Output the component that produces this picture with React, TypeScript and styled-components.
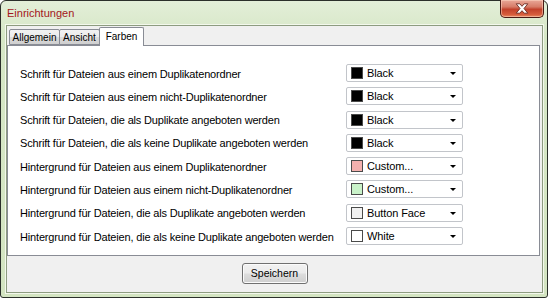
import React from 'react'
import styled, { createGlobalStyle } from 'styled-components'

const GlobalStyle = createGlobalStyle`
  html, body {
    margin: 0;
    padding: 0;
    background: #ffffff;
  }
  body {
    font-family: "Liberation Sans", Arial, sans-serif;
    font-size: 11px;
    color: #000;
  }
`

const Window = styled.div`
  box-sizing: border-box;
  width: 548px;
  height: 298px;
  border: 1px solid #2b2f2a;
  border-radius: 6px 6px 3px 3px;
  background: linear-gradient(180deg, #e3eed8 0%, #d6e7c6 12%, #d3e4c1 100%);
  display: flex;
  flex-direction: column;
  padding: 0 4px 4px 5px;
  position: relative;
`

const TitleBar = styled.div`
  height: 24px;
  display: flex;
  align-items: center;
  padding-left: 1px;
`

const Title = styled.span`
  font-size: 11px;
  color: #a3161b;
  margin-top: -1px;
`

const CloseButton = styled.div`
  position: absolute;
  top: -1px;
  right: 3px;
  width: 44px;
  height: 18px;
  box-sizing: border-box;
  border: 1px solid #4a1a14;
  border-top: none;
  border-radius: 0 0 5px 5px;
  background: linear-gradient(180deg, #e9a898 0%, #d77c68 40%, #c2412b 55%, #d65c3c 85%, #e88a62 100%);
  box-shadow: inset 0 0 0 1px rgba(255, 220, 200, 0.5);
  display: flex;
  align-items: center;
  justify-content: center;
`

const Client = styled.div`
  flex: 1;
  display: flex;
  flex-direction: column;
  background: #f0f0f0;
  border: 1px solid #8d9c80;
  box-shadow: 0 0 0 1px #f3f8ec;
  padding: 1px 2px 0 0;
`

const TabStrip = styled.div`
  display: flex;
  align-items: flex-end;
  height: 18px;
  padding-left: 2px;
  position: relative;
  z-index: 1;
`

const Tab = styled.div<{ $active?: boolean; $width: number }>`
  box-sizing: border-box;
  width: ${({ $width }) => $width}px;
  height: ${({ $active }) => ($active ? 19 : 16)}px;
  margin-bottom: ${({ $active }) => ($active ? -1 : 0)}px;
  margin-left: ${({ $active }) => ($active ? -1 : 0)}px;
  border: 1px solid #898c95;
  border-bottom: ${({ $active }) => ($active ? 'none' : '1px solid #898c95')};
  border-radius: 2px 2px 0 0;
  background: ${({ $active }) =>
    $active ? '#ffffff' : 'linear-gradient(180deg, #f2f2f2 0%, #ebebeb 50%, #dcdcdc 51%, #cfcfcf 100%)'};
  font-size: 10px;
  display: flex;
  justify-content: center;
  align-items: ${({ $active }) => ($active ? 'flex-start' : 'center')};
  padding-top: ${({ $active }) => ($active ? 3 : 0)}px;
  & + & {
    margin-left: ${({ $active }) => ($active ? -1 : 1)}px;
  }
`

const Panel = styled.div`
  height: 211px;
  box-sizing: border-box;
  background: #ffffff;
  border: 1px solid #898c95;
  padding: 18px 0 0 12px;
`

const Grid = styled.div`
  display: grid;
  grid-template-columns: 326px 117px;
  grid-auto-rows: 18px;
  row-gap: 5.3px;
`

const Label = styled.div`
  align-self: center;
  font-size: 11px;
  letter-spacing: -0.17px;
  white-space: nowrap;
  margin-top: 1px;
`

const Combo = styled.div`
  box-sizing: border-box;
  height: 18px;
  border: 1px solid #c2c5ca;
  border-radius: 2px;
  background: #ffffff;
  display: flex;
  align-items: center;
  padding: 0 4px 0 4px;
`

const Swatch = styled.span<{ $color: string }>`
  box-sizing: border-box;
  width: 12px;
  height: 12px;
  border: 1px solid #4a4a4a;
  background: ${({ $color }) => $color};
  flex: none;
`

const ComboText = styled.span`
  margin-left: 4px;
  flex: 1;
  font-size: 11px;
  letter-spacing: -0.1px;
`

const Arrow = styled.span`
  width: 0;
  height: 0;
  border-left: 3px solid transparent;
  border-right: 3px solid transparent;
  border-top: 3px solid #000;
  margin-right: 2px;
  margin-top: 1px;
`

const Footer = styled.div`
  flex: 1;
  display: flex;
  justify-content: center;
  align-items: center;
  padding-bottom: 2px;
`

const Button = styled.button`
  box-sizing: border-box;
  width: 66px;
  height: 21px;
  margin-left: 2px;
  border: 1px solid #707070;
  border-radius: 3px;
  background: linear-gradient(180deg, #f2f2f2 0%, #ebebeb 48%, #dddddd 52%, #cfcfcf 100%);
  box-shadow: inset 0 0 0 1px #fbfbfb;
  font-family: "Liberation Sans", Arial, sans-serif;
  font-size: 10.5px;
  color: #000;
  padding: 0;
`

const rows: { label: string; color: string; value: string }[] = [
  { label: 'Schrift für Dateien aus einem Duplikatenordner', color: '#000000', value: 'Black' },
  { label: 'Schrift für Dateien aus einem nicht-Duplikatenordner', color: '#000000', value: 'Black' },
  { label: 'Schrift für Dateien, die als Duplikate angeboten werden', color: '#000000', value: 'Black' },
  { label: 'Schrift für Dateien, die als keine Duplikate angeboten werden', color: '#000000', value: 'Black' },
  { label: 'Hintergrund für Dateien aus einem Duplikatenordner', color: '#f4b0ae', value: 'Custom...' },
  { label: 'Hintergrund für Dateien aus einem nicht-Duplikatenordner', color: '#c9f2c9', value: 'Custom...' },
  { label: 'Hintergrund für Dateien, die als Duplikate angeboten werden', color: '#f0f0f0', value: 'Button Face' },
  { label: 'Hintergrund für Dateien, die als keine Duplikate angeboten werden', color: '#ffffff', value: 'White' },
]

const CloseIcon = () => (
  <svg width="14" height="11" viewBox="0 0 14 11">
    <path
      d="M1.2 0.8 L4.8 0.8 L7 3.3 L9.2 0.8 L12.8 0.8 L9 5.5 L12.8 10.2 L9.2 10.2 L7 7.7 L4.8 10.2 L1.2 10.2 L5 5.5 Z"
      fill="#ffffff"
      stroke="#6a2a20"
      strokeWidth="0.9"
      strokeLinejoin="round"
    />
  </svg>
)

export default function App() {
  return (
    <>
      <GlobalStyle />
      <Window>
        <TitleBar>
          <Title>Einrichtungen</Title>
        </TitleBar>
        <CloseButton>
          <CloseIcon />
        </CloseButton>
        <Client>
          <TabStrip>
            <Tab $width={51}>Allgemein</Tab>
            <Tab $width={41}>Ansicht</Tab>
            <Tab $width={45} $active>
              Farben
            </Tab>
          </TabStrip>
          <Panel>
            <Grid>
              {rows.map((r) => (
                <React.Fragment key={r.label}>
                  <Label>{r.label}</Label>
                  <Combo>
                    <Swatch $color={r.color} />
                    <ComboText>{r.value}</ComboText>
                    <Arrow />
                  </Combo>
                </React.Fragment>
              ))}
            </Grid>
          </Panel>
          <Footer>
            <Button>Speichern</Button>
          </Footer>
        </Client>
      </Window>
    </>
  )
}
